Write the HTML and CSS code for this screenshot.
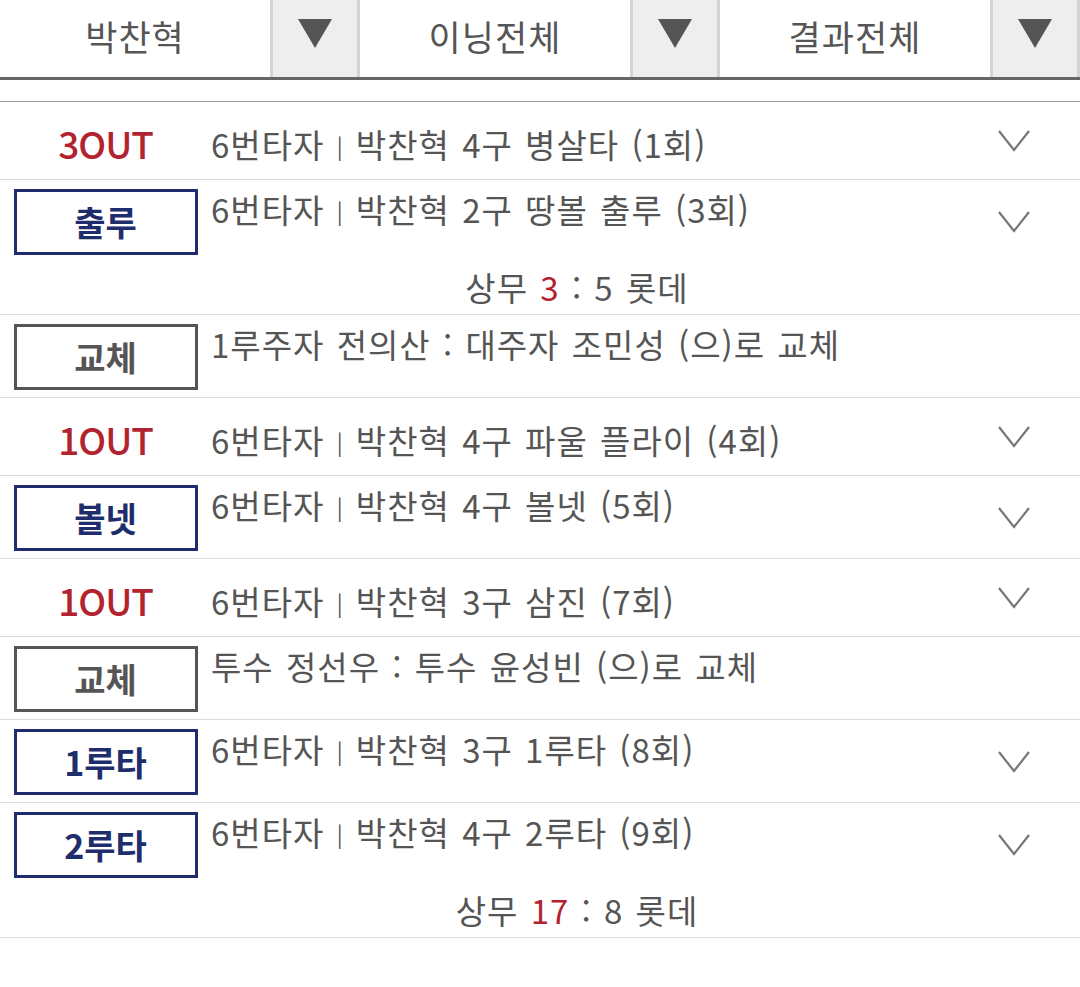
FILE: index.html
```html
<!DOCTYPE html>
<html lang="ko">
<head>
<meta charset="utf-8">
<title>문자중계</title>
<link rel="stylesheet" href="styles.css">
</head>
<body>
<div class="filters">
  <div class="filter"><div class="label">박찬혁</div><div class="arrow"><svg width="34" height="29" viewBox="0 0 34 29"><polygon points="0,0 34,0 17,29" fill="#555"/></svg></div></div>
  <div class="filter"><div class="label">이닝전체</div><div class="arrow"><svg width="34" height="29" viewBox="0 0 34 29"><polygon points="0,0 34,0 17,29" fill="#555"/></svg></div></div>
  <div class="filter"><div class="label">결과전체</div><div class="arrow"><svg width="34" height="29" viewBox="0 0 34 29"><polygon points="0,0 34,0 17,29" fill="#555"/></svg></div></div>
</div>
<div class="list">
  <div class="row out">
    <div class="outlabel">3OUT</div>
    <div class="desc">6번타자 <span class="sep">|</span> 박찬혁 4구 병살타 (1회)</div>
    <div class="chev"><svg width="32" height="22" viewBox="0 0 32 22"><polyline points="1,1 16,20 31,1" fill="none" stroke="#777" stroke-width="2.2"/></svg></div>
  </div>
  <div class="row badge-row">
    <div class="badge navy">출루</div>
    <div class="desc">6번타자 <span class="sep">|</span> 박찬혁 2구 땅볼 출루 (3회)</div>
    <div class="chev"><svg width="32" height="22" viewBox="0 0 32 22"><polyline points="1,1 16,20 31,1" fill="none" stroke="#777" stroke-width="2.2"/></svg></div>
    <div class="score">상무 <span class="red">3</span> : 5 롯데</div>
  </div>
  <div class="row badge-row">
    <div class="badge gray">교체</div>
    <div class="desc">1루주자 전의산 : 대주자 조민성 (으)로 교체</div>
  </div>
  <div class="row out">
    <div class="outlabel">1OUT</div>
    <div class="desc">6번타자 <span class="sep">|</span> 박찬혁 4구 파울 플라이 (4회)</div>
    <div class="chev"><svg width="32" height="22" viewBox="0 0 32 22"><polyline points="1,1 16,20 31,1" fill="none" stroke="#777" stroke-width="2.2"/></svg></div>
  </div>
  <div class="row badge-row">
    <div class="badge navy">볼넷</div>
    <div class="desc">6번타자 <span class="sep">|</span> 박찬혁 4구 볼넷 (5회)</div>
    <div class="chev"><svg width="32" height="22" viewBox="0 0 32 22"><polyline points="1,1 16,20 31,1" fill="none" stroke="#777" stroke-width="2.2"/></svg></div>
  </div>
  <div class="row out">
    <div class="outlabel">1OUT</div>
    <div class="desc">6번타자 <span class="sep">|</span> 박찬혁 3구 삼진 (7회)</div>
    <div class="chev"><svg width="32" height="22" viewBox="0 0 32 22"><polyline points="1,1 16,20 31,1" fill="none" stroke="#777" stroke-width="2.2"/></svg></div>
  </div>
  <div class="row badge-row">
    <div class="badge gray">교체</div>
    <div class="desc">투수 정선우 : 투수 윤성빈 (으)로 교체</div>
  </div>
  <div class="row badge-row">
    <div class="badge navy">1루타</div>
    <div class="desc">6번타자 <span class="sep">|</span> 박찬혁 3구 1루타 (8회)</div>
    <div class="chev"><svg width="32" height="22" viewBox="0 0 32 22"><polyline points="1,1 16,20 31,1" fill="none" stroke="#777" stroke-width="2.2"/></svg></div>
  </div>
  <div class="row badge-row">
    <div class="badge navy">2루타</div>
    <div class="desc">6번타자 <span class="sep">|</span> 박찬혁 4구 2루타 (9회)</div>
    <div class="chev"><svg width="32" height="22" viewBox="0 0 32 22"><polyline points="1,1 16,20 31,1" fill="none" stroke="#777" stroke-width="2.2"/></svg></div>
    <div class="score">상무 <span class="red">17</span> : 8 롯데</div>
  </div>
</div>
</body>
</html>
```
FILE: styles.css
```css
html, body {
  margin: 0;
  padding: 0;
  background: #fff;
}
body {
  width: 1080px;
  font-family: "Noto Sans CJK KR", "Noto Sans", sans-serif;
  color: #555;
}
.filters {
  display: flex;
  height: 77px;
  border-bottom: 3px solid #666;
}
.filter {
  display: flex;
  width: 360px;
}
.label {
  width: 270px;
  display: flex;
  align-items: center;
  justify-content: center;
  font-size: 35px;
  line-height: 40px;
  letter-spacing: 1px;
  padding-bottom: 5px;
  box-sizing: border-box;
}
.arrow {
  width: 90px;
  box-sizing: border-box;
  background: #eeeeee;
  border-left: 3px solid #d4d4d4;
  border-right: 3px solid #d4d4d4;
  display: flex;
  justify-content: center;
  align-items: flex-start;
  padding-top: 19px;
}
.arrow svg { display: block; }
.list {
  margin-top: 21px;
  border-top: 1px solid #a0a0a0;
}
.row {
  display: grid;
  grid-template-columns: 211px 1fr 133px;
  border-bottom: 1px solid #dcdcdc;
}
.row.out {
  height: 77px;
  align-items: center;
}
.row.badge-row {
  padding: 9px 0 7px;
  align-items: start;
  min-height: 66px;
}
.outlabel {
  grid-column: 1;
  justify-self: center;
  color: #b3222f;
  font-size: 37px;
  font-weight: 500;
  line-height: 40px;
  padding-top: 4px;
  letter-spacing: -1px;
}
.desc {
  grid-column: 2;
  font-size: 33px;
  line-height: 40px;
  letter-spacing: 1px;
  word-spacing: 2px;
  white-space: nowrap;
}
.row.out .desc {
  padding-top: 8px;
}
.sep {
  font-size: 22px;
  vertical-align: 3px;
}
.chev {
  grid-column: 3;
  grid-row: 1;
  display: flex;
  justify-content: center;
  align-items: center;
}
.row.badge-row .chev {
  height: 66px;
}
.chev svg { display: block; }
.badge {
  grid-column: 1;
  grid-row: 1;
  justify-self: center;
  width: 184px;
  height: 66px;
  box-sizing: border-box;
  border: 3px solid;
  display: flex;
  align-items: center;
  justify-content: center;
  font-size: 34px;
  font-weight: 700;
  line-height: 40px;
}
.badge.navy {
  border-color: #1f2d6c;
  color: #1f2d6c;
}
.badge.gray {
  border-color: #555;
  color: #555;
}
.score {
  grid-column: 2;
  grid-row: 2;
  text-align: center;
  font-size: 33px;
  line-height: 40px;
  letter-spacing: 1px;
  word-spacing: 2px;
  margin-top: 12px;
  padding-right: 4px;
}
.red {
  color: #b3222f;
}
```
